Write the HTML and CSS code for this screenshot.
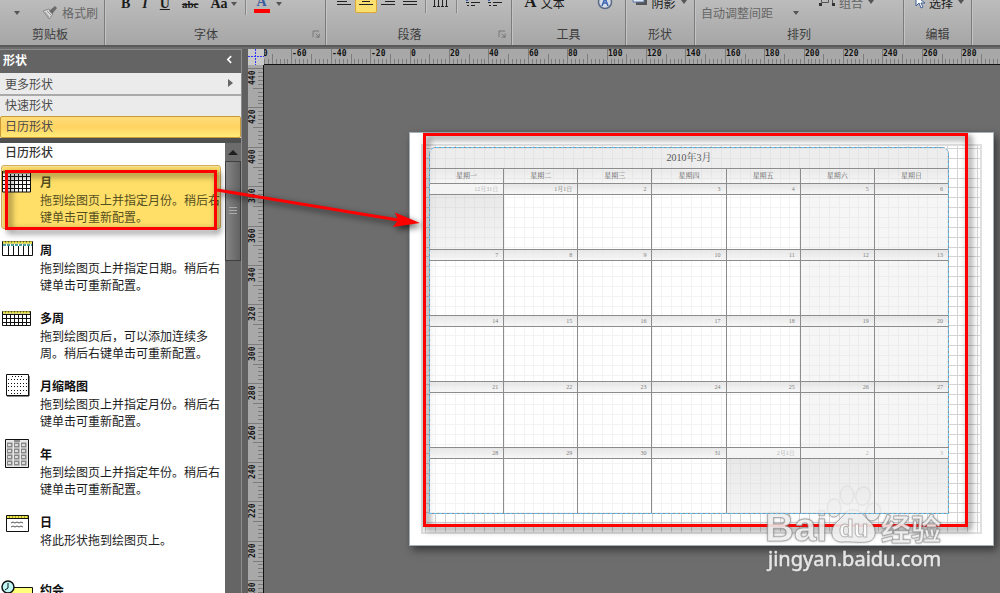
FILE: index.html
```html
<!DOCTYPE html>
<html lang="zh-CN">
<head>
<meta charset="utf-8">
<title>形状</title>
<link rel="stylesheet" href="styles.css">
</head>
<body>
<div class="app">
  <header class="ribbon">
    <section class="group group-clipboard">
      <div class="tools tools-low">
        <svg class="caret" viewBox="0 0 6 4"><path d="M0 0h6L3 4z"/></svg>
        <button class="tool muted"><svg class="brush" viewBox="0 0 16 14"><path d="M1 5l6-2 4 5-4 5-2-3z" fill="#d8d8d8" stroke="#888"/><path d="M7 5l6-5 2 2-5 6z" fill="#6a6a6a"/><path d="M3 6l4 5M5 5l4 4" stroke="#999" fill="none"/></svg>格式刷</button>
      </div>
      <h2>剪贴板</h2>
    </section>
    <section class="group group-font">
      <div class="tools tools-font">
        <button class="tool glyph bold">B</button>
        <button class="tool glyph italic">I</button>
        <button class="tool glyph under">U</button>
        <button class="tool glyph strike">abc</button>
        <button class="tool glyph case">Aa<svg class="caret" viewBox="0 0 6 4"><path d="M0 0h6L3 4z"/></svg></button>
        <i class="divider"></i>
        <button class="tool glyph color"><span>A</span></button>
        <svg class="caret" viewBox="0 0 6 4"><path d="M0 0h6L3 4z"/></svg>
      </div>
      <h2>字体</h2>
      <svg class="launcher" viewBox="0 0 8 8"><path d="M0 7V0h7M3 3l4 4M7 3v4H3" /></svg>
    </section>
    <section class="group group-para">
      <div class="tools tools-para">
        <button class="tool" aria-label="左对齐"><svg class="lines" viewBox="0 0 16 10"><path d="M1 1.500h14M1 4.500h10M1 7.500h14"/></svg></button>
        <button class="tool active" aria-label="居中"><svg class="lines" viewBox="0 0 16 10"><path d="M1 1.500h14M4 4.500h8M1 7.500h14"/></svg></button>
        <button class="tool" aria-label="右对齐"><svg class="lines" viewBox="0 0 16 10"><path d="M1 1.500h14M5 4.500h10M1 7.500h14"/></svg></button>
        <button class="tool" aria-label="两端对齐"><svg class="lines" viewBox="0 0 16 10"><path d="M1 1.500h14M1 4.500h14M1 7.500h14"/></svg></button>
        <i class="divider"></i>
        <button class="tool" aria-label="文字方向"><svg class="lines" viewBox="0 0 16 10"><path d="M1.500 0v9M5.500 0v9M9.500 3v6M13.500 3v6M0 9.500h3M4 9.500h3M8 9.500h3M12 9.500h3" /><path d="M8 1.500h3M12 1.500h3" stroke="#3b64b0"/></svg></button>
        <i class="divider"></i>
        <button class="tool" aria-label="减少缩进"><svg class="lines" viewBox="0 0 16 10"><path d="M6 2.500h5M7 5.500h9M7 8.500h4M2 5.500h3M3 8.500h2"/><path d="M0 1.500h5M3 0v4" stroke="#3b64b0" stroke-width="2"/></svg></button>
        <button class="tool" aria-label="增加缩进"><svg class="lines" viewBox="0 0 16 10"><path d="M6 2.500h5M7 5.500h9M7 8.500h4M2 5.500h3M3 8.500h2"/><path d="M0 1.500h5M3 0v4" stroke="#3b64b0" stroke-width="2"/></svg></button>
      </div>
      <h2>段落</h2>
      <svg class="launcher" viewBox="0 0 8 8"><path d="M0 7V0h7M3 3l4 4M7 3v4H3" /></svg>
    </section>
    <section class="group group-tools">
      <div class="tools tools-text">
        <button class="tool"><b class="serif-a">A</b>文本</button>
        <button class="tool" aria-label="连接点"><svg class="round" viewBox="0 0 16 16"><circle cx="8" cy="8" r="6.5" fill="#d5dce8" stroke="#5a6b85" stroke-width="1.5"/><path d="M5 12L8 4l3 8M6 9h4" fill="none" stroke="#3b64b0" stroke-width="1.5"/></svg></button>
      </div>
      <h2>工具</h2>
    </section>
    <section class="group group-shape">
      <div class="tools tools-text">
        <button class="tool"><svg class="shade" viewBox="0 0 14 8"><path d="M3 2h11v5H3z" fill="#555"/><path d="M0 0h11v4H0z" fill="#dfe8f4" stroke="#5b79a5"/></svg>阴影</button>
        <svg class="caret" viewBox="0 0 6 4"><path d="M0 0h6L3 4z"/></svg>
      </div>
      <h2>形状</h2>
    </section>
    <section class="group group-arrange">
      <div class="tools tools-low">
        <button class="tool muted">自动调整间距</button>
        <svg class="caret" viewBox="0 0 6 4"><path d="M0 0h6L3 4z"/></svg>
      </div>
      <div class="tools tools-text tools-end">
        <button class="tool muted"><svg class="combine" viewBox="0 0 16 10"><path d="M2.500 0v5.500h7V0M6 2.500h7.500V6" fill="none" stroke="#555"/><path d="M0 6h3v3H0zM13 6h3v3h-3z" fill="#333"/></svg>组合</button>
        <svg class="caret" viewBox="0 0 6 4"><path d="M0 0h6L3 4z"/></svg>
      </div>
      <h2>排列</h2>
    </section>
    <section class="group group-edit">
      <div class="tools tools-text">
        <button class="tool"><svg class="cursor" viewBox="0 0 10 13"><path d="M1 0v10l3-3 2 5 2-1-2-4h4z" fill="#fff" stroke="#3f5f96"/></svg>选择</button>
        <svg class="caret" viewBox="0 0 6 4"><path d="M0 0h6L3 4z"/></svg>
      </div>
      <h2>编辑</h2>
    </section>
  </header>

  <main class="workspace">
    <aside class="shapes">
      <div class="shapes-head"><h1>形状</h1><button class="collapse" aria-label="折叠"><svg viewBox="0 0 6 8"><path d="M5 0L1 4l4 4"/></svg></button></div>
      <nav class="stencils">
        <button class="stencil more">更多形状<svg viewBox="0 0 5 8"><path d="M0 0l5 4-5 4z"/></svg></button>
        <button class="stencil">快速形状</button>
        <button class="stencil chosen">日历形状</button>
      </nav>
      <div class="panel">
        <div class="list">
          <h2>日历形状</h2>
          <article class="item picked">
            <svg class="icon" viewBox="0 0 32 28"><path d="M2 3h28v21H2z" fill="#fff"/><path d="M2 4h28" stroke="#77772a" stroke-width="3"/><path d="M1.500 3v21h28V3M1 8.500h29M1 12.500h29M1 16.500h29M1 20.500h29M5.500 6v18M9.500 6v18M13.500 6v18M17.500 6v18M21.500 6v18M25.500 6v18" class="ink"/></svg>
            <div><h3>月</h3><p>拖到绘图页上并指定月份。稍后右键单击可重新配置。</p></div>
          </article>
          <article class="item">
            <svg class="icon" viewBox="0 0 32 28"><path d="M1.500 5.500h30v14h-30z" fill="#fff" class="ink"/><path d="M2 6.500h29" stroke="#a5a12c" stroke-width="2"/><path d="M2 6.500h29" stroke="#ece64a" stroke-width="2" stroke-dasharray="2 1"/><path d="M2 9h29" stroke="#4b9c9c" stroke-width="2" stroke-dasharray="3 1"/><path d="M7.500 10v9M12.500 10v9M17.500 10v9M22.500 10v9M27.500 10v9" class="ink"/></svg>
            <div><h3>周</h3><p>拖到绘图页上并指定日期。稍后右键单击可重新配置。</p></div>
          </article>
          <article class="item">
            <svg class="icon" viewBox="0 0 32 28"><path d="M1.500 7.500h28v14h-28z" fill="#fff" class="ink"/><path d="M2 8.500h27" stroke="#a5a12c" stroke-width="2"/><path d="M2 8.500h27" stroke="#ece64a" stroke-width="2" stroke-dasharray="2 1"/><path d="M1 10.500h29M1 14.500h29M1 18.500h29M5.500 10v11M9.500 10v11M13.500 10v11M17.500 10v11M21.500 10v11M25.500 10v11" class="ink"/></svg>
            <div><h3>多周</h3><p>拖到绘图页后，可以添加连续多周。稍后右键单击可重新配置。</p></div>
          </article>
          <article class="item">
            <svg class="icon" viewBox="0 0 32 28"><path d="M5.500 2.500h22v21h-22z" fill="#fff" class="ink"/><path d="M28 4v20H6" class="ink"/><path d="M11 4.500h10M7 7.500h19M7 11.500h19M7 14.500h19M7 18.500h19M10 21.500h10" class="ink" stroke-dasharray="1 2"/></svg>
            <div><h3>月缩略图</h3><p>拖到绘图页上并指定月份。稍后右键单击可重新配置。</p></div>
          </article>
          <article class="item">
            <svg class="icon tall" viewBox="0 0 32 32"><path d="M4.500 1.500h23v28h-23z" fill="#e8e8e8" class="ink"/><path d="M13 3h6" stroke="#333"/><path d="M6 7h5.500M13 7h5.500M20 7h5.500M6 13h5.500M13 13h5.500M20 13h5.500M6 19h5.500M13 19h5.500M20 19h5.500M6 25h5.500M13 25h5.500M20 25h5.500" stroke="#888" stroke-width="5"/><path d="M7 7h3M14 7h3M21 7h3M7 13h3M14 13h3M21 13h3M7 19h3M14 19h3M21 19h3M7 25h3M14 25h3M21 25h3" stroke="#ddd" stroke-width="2"/></svg>
            <div><h3>年</h3><p>拖到绘图页上并指定年份。稍后右键单击可重新配置。</p></div>
          </article>
          <article class="item">
            <svg class="icon" viewBox="0 0 32 28"><path d="M5.500 7.500h22v16h-22z" fill="#fff" class="ink"/><path d="M6 9h21" stroke="#a5a12c" stroke-width="2"/><path d="M6 9h21" stroke="#ece64a" stroke-width="2" stroke-dasharray="2 1"/><path d="M5 10.500h23" class="ink"/><path d="M10 15l2-1 2 1 2-1 2 1 2-1 2 1M10 19l2-1 2 1 2-1 2 1 2-1 2 1" stroke="#555" fill="none"/></svg>
            <div><h3>日</h3><p>将此形状拖到绘图页上。</p></div>
          </article>
          <article class="item">
            <svg class="icon" viewBox="0 0 32 28"><path d="M7.500 11.500h24v16h-24z" fill="#ffff7a" class="ink"/><circle cx="7" cy="11" r="6" fill="#bff6f6" stroke="#111" stroke-width="1.500"/><path d="M7 7v5l-3 2" class="ink"/></svg>
            <div><h3>约会</h3></div>
          </article>
        </div>
        <div class="scroll"><button class="scroll-up" aria-label="向上滚动"><svg viewBox="0 0 10 5"><path d="M0 5l5-5 5 5z"/></svg></button><div class="thumb"><svg viewBox="0 0 8 8"><path d="M0 .5h8M0 3.500h8M0 6.500h8"/></svg></div></div>
      </div>
    </aside>

    <section class="editor">
      <svg class="corner" viewBox="0 0 16 16"><path d="M0 7.500h16M7.500 0v16"/></svg>
      <svg class="ruler ruler-x" id="ruler-x"></svg>
      <svg class="ruler ruler-y" id="ruler-y"></svg>
      <div class="canvas">
        <div class="page">
          <svg class="grid" id="grid"></svg>
          <div class="calendar">
            <table>
              <thead>
                <tr class="title"><th colspan="7">2010年3月</th></tr>
                <tr class="weekdays"><th>星期一</th><th>星期二</th><th>星期三</th><th>星期四</th><th>星期五</th><th>星期六</th><th>星期日</th></tr>
              </thead>
              <tbody>
                <tr><td class="out"><span>12月31日</span></td><td><span>1月1日</span></td><td><span>2</span></td><td><span>3</span></td><td><span>4</span></td><td><span>5</span></td><td><span>6</span></td></tr>
                <tr><td><span>7</span></td><td><span>8</span></td><td><span>9</span></td><td><span>10</span></td><td><span>11</span></td><td><span>12</span></td><td><span>13</span></td></tr>
                <tr><td><span>14</span></td><td><span>15</span></td><td><span>16</span></td><td><span>17</span></td><td><span>18</span></td><td><span>19</span></td><td><span>20</span></td></tr>
                <tr><td><span>21</span></td><td><span>22</span></td><td><span>23</span></td><td><span>24</span></td><td><span>25</span></td><td><span>26</span></td><td><span>27</span></td></tr>
                <tr><td><span>28</span></td><td><span>29</span></td><td><span>30</span></td><td><span>31</span></td><td class="out"><span>2月1日</span></td><td class="out"><span>2</span></td><td class="out"><span>3</span></td></tr>
              </tbody>
            </table>
          </div>
        </div>
      </div>
    </section>
  </main>

  <svg class="marks" viewBox="0 0 1000 593">
    <g class="red">
      <rect x="6.500" y="171.500" width="209" height="57"/>
      <rect x="424.500" y="134.500" width="542" height="391"/>
      <path d="M217 190L398 220" class="shaft"/>
      <path d="M395 212.500L420 223L393 227L398 220Z" class="head"/>
    </g>
    <g class="stamp">
      <text x="765" y="541" class="logo">Bai</text>
      <ellipse cx="834" cy="508" rx="6.500" ry="9"/>
      <ellipse cx="847" cy="495" rx="6.500" ry="9"/>
      <ellipse cx="863" cy="496" rx="7" ry="9" transform="rotate(12 863 496)"/>
      <ellipse cx="873" cy="512" rx="7" ry="9" transform="rotate(20 873 512)"/>
      <path d="M853 510c8 0 11 6 16 11c8 6 9 20-3 21c-8 1-17-1-25 0c-12-1-11-15-3-21c6-5 8-11 15-11z"/>
      <text x="839" y="537" class="du">du</text>
      <text x="881" y="540" class="word">经验</text>
      <text x="768" y="566" class="site">jingyan.baidu.com</text>
    </g>
  </svg>
</div>
<script src="rulers.js"></script>
</body>
</html>
```
FILE: styles.css
```css
* { box-sizing: border-box; }

body {
  margin: 0;
  background: #6d6d6d;
  color: #1c1c1c;
  font: 12px/17px "Noto Sans CJK SC", sans-serif;
}

h1, h2, h3, p { margin: 0; font-size: 12px; }

button {
  padding: 0;
  border: 0;
  background: none;
  color: inherit;
  font: inherit;
}

svg { display: block; flex: none; overflow: visible; }

.app {
  position: relative;
  display: flex;
  flex-direction: column;
  height: 100vh;
  overflow: hidden;
}

/* Ribbon */
.ribbon {
  display: flex;
  flex: none;
  height: 47px;
  overflow: hidden;
  border-bottom: 2px solid #595959;
  background: linear-gradient(#bcbcbc, #a6a6a6);
}

.group {
  position: relative;
  display: flex;
  flex: none;
  flex-wrap: wrap;
  align-content: flex-end;
  align-items: flex-end;
  justify-content: center;
  border-right: 1px solid #7c7c7c;
  box-shadow: 1px 0 #c4c4c4;
}

.group h2 {
  width: 100%;
  padding: 2px 4px 3px 0;
  color: #3d3d3d;
  font-weight: 400;
  text-align: center;
}

.group-clipboard { width: 105px; }
.group-clipboard .tools { padding-left: 8px; }
.group-font { width: 221px; }
.group-font h2 { padding-right: 18px; }
.group-para { width: 186px; }
.group-para h2 { padding-right: 18px; }
.group-tools { width: 114px; }
.group-tools h2 { padding-right: 0; }
.group-shape { width: 69px; }
.group-shape h2 { padding-right: 0; }
.group-arrange { width: 209px; justify-content: flex-start; }
.group-arrange h2 { padding-right: 0; }
.group-edit { width: 68px; }
.group-edit h2 { padding-right: 0; }
.group-edit .tools { padding-left: 4px; }

.tools { display: flex; align-items: center; }
.tools-low { height: 21px; gap: 22px; }
.tools-font { width: 100%; height: 31px; gap: 12px; padding: 0 0 8px 16px; }
.tools-para { width: 100%; height: 33px; padding: 0 10px 10px; gap: 6px; }
.tools-text { height: 31px; padding-bottom: 11px; gap: 5px; }
.group-tools .tools-text { gap: 32px; }
.group-arrange .tools-low { padding-left: 6px; gap: 20px; }
.tools-end { margin-left: 20px; }

.tool { display: flex; align-items: center; gap: 4px; white-space: nowrap; }
.muted { color: #666; }
.glyph { font: bold 14px/18px "Liberation Serif", serif; }
.italic { font-style: italic; }
.under { text-decoration: underline; }
.strike { font-size: 11px; text-decoration: line-through; }
.case { gap: 3px; }
.color span { padding: 0 3px; border-bottom: 4px solid #f00; color: #3b5ca0; line-height: 14px; }
.tools-font .divider { margin: 0 -4px; }
.tools-font .color + .caret { margin-left: -6px; }
.serif-a { font: bold 17px/18px "Liberation Serif", serif; }

.active {
  height: 22px;
  padding: 0 2px;
  margin: 0 -3px;
  border: 1px solid #d9a836;
  border-radius: 2px;
  background: #fbe070;
}

.divider { flex: none; width: 1px; height: 22px; background: #868686; box-shadow: 1px 0 #c9c9c9; }
.tools-para .divider { margin: 0 1px; }
.caret { width: 6px; height: 4px; fill: #555; }
.brush { width: 16px; height: 14px; }
.round { width: 16px; height: 16px; }
.shade { width: 14px; height: 8px; }
.combine { width: 16px; height: 10px; }
.cursor { width: 10px; height: 13px; }
.lines { width: 16px; height: 10px; fill: none; stroke: #222; }

.launcher {
  position: absolute;
  right: 5px;
  bottom: 7px;
  width: 7px;
  height: 7px;
  fill: none;
  stroke: #707070;
}

/* Shapes pane */
.workspace { display: flex; flex: 1; min-height: 0; padding-top: 2px; }

.shapes {
  display: flex;
  flex: none;
  flex-direction: column;
  width: 242px;
  border-right: 1px solid #8d8d8d;
}

.shapes-head {
  display: flex;
  align-items: center;
  justify-content: space-between;
  height: 24px;
  padding: 0 9px 4px 3px;
  border-top: 1px solid #8d8d8d;
  background: #646464;
  color: #fff;
}

.collapse svg { width: 5px; height: 7px; fill: none; stroke: #fff; stroke-width: 2; }

.stencils { display: flex; flex-direction: column; border-bottom: 5px solid #505050; background: #ebebeb; }

.stencil {
  display: flex;
  align-items: center;
  justify-content: space-between;
  height: 20px;
  padding: 0 8px 3px 5px;
  color: #4b4b4b;
  text-align: left;
}

.more { height: 23px; padding-bottom: 1px; border-bottom: 2px solid #aaa; }
.more svg { width: 5px; height: 8px; fill: #666; }

.chosen {
  height: 22px;
  padding-left: 4px;
  border: 1px solid #c99b38;
  border-radius: 2px;
  background: linear-gradient(#fcdc78, #ffd362 50%, #ffec78);
}

.panel { display: flex; flex: 1; min-height: 0; overflow: hidden; background: #fff; }
.list { flex: 1; min-width: 0; }
.list > h2 { height: 22px; padding: 0 5px; color: #333; font-weight: 500; }

.item {
  display: flex;
  gap: 7px;
  height: 64px;
  margin: 0 4px 4px 1px;
  padding: 6px 0 0;
  border: 1px solid transparent;
  border-radius: 3px;
}

.item > div { flex: none; width: 182px; }
.item h3 { color: #111; font-weight: 700; line-height: 19px; }
.item p { color: #1c1c1c; }

.picked { border-color: #d3ad55; background: #ffdf68; box-shadow: inset 0 0 0 1px #f6e3a4; }
.picked h3, .picked p { color: #55501f; }

.icon { width: 32px; height: 28px; margin: -4px 0 0 -1px; }
.tall { height: 32px; margin-top: -6px; }
.ink { stroke: #111; }
path.ink:not([fill]) { fill: none; }

.scroll { flex: none; width: 16px; background: #656565; }

.scroll-up {
  display: flex;
  align-items: center;
  justify-content: center;
  width: 100%;
  height: 18px;
  background: #6c6c6c;
}

.scroll-up svg { width: 10px; height: 5px; fill: #1e1e1e; }

.thumb {
  display: flex;
  align-items: center;
  justify-content: center;
  height: 100px;
  border: 1px solid #3f3f3f;
  background: linear-gradient(90deg, #858585, #626262);
}

.thumb svg { width: 8px; height: 8px; stroke: #aaa; }

/* Drawing area */
.editor {
  display: grid;
  flex: 1;
  grid-template: 16px 1fr / 16px 1fr;
  min-width: 0;
  padding-left: 6px;
  background: #606060;
}

.corner { width: 16px; height: 16px; background: #c9c9c9; stroke: #33f; stroke-dasharray: 2 1; }
.ruler { overflow: hidden; background: #a8a8a8; }
.ruler-x { width: 100%; height: 16px; border-bottom: 1px solid #111; }
.ruler-y { width: 16px; height: 100%; border-right: 1px solid #111; }
.ruler path { fill: none; stroke: #7c7c7c; }
.ruler text { fill: #111; font: bold 8px "DejaVu Sans Mono", monospace; }

.canvas { min-width: 0; padding: 67px 6px 47px 145px; background: #6d6d6d; }

.page {
  display: grid;
  height: 100%;
  padding: 12px;
  border: 1px solid #a4b0b6;
  background: #fff;
  box-shadow: 3px 4px 8px rgba(0, 0, 0, .5);
}

.grid { grid-area: 1 / 1; width: 100%; height: 100%; overflow: hidden; outline: 2px solid #e0e0e0; outline-offset: -1px; }
.grid path { fill: none; stroke: #d4d4d4; }

.calendar {
  position: relative;
  z-index: 1;
  grid-area: 1 / 1;
  align-self: start;
  margin: 2px 32px 0 7px;
  overflow: hidden;
  border-radius: 7px 7px 0 0;
}

.calendar::after {
  position: absolute;
  inset: 0;
  border: 1px dashed #5fc0f2;
  border-radius: 7px 7px 0 0;
  content: "";
}

table {
  width: 100%;
  border-collapse: collapse;
  table-layout: fixed;
  color: #808080;
  font: 6px/10px "Liberation Serif", "Noto Serif CJK SC", "Noto Sans CJK SC", serif;
}

th, td { padding: 0; border: 1px solid #8c8c8c; background: rgba(255, 255, 255, .72); }
th { background: rgba(232, 232, 232, .78); font-weight: 400; }
.title th { height: 21px; color: #555; font-size: 10px; }
.weekdays th { height: 15px; background: linear-gradient(rgba(228, 228, 228, .8), rgba(244, 244, 244, .8)); color: #666; font-size: 7px; }
td { height: 66px; vertical-align: top; }
td:nth-child(n+6) { background: rgba(243, 243, 243, .78); }

td span {
  display: block;
  height: 11px;
  padding-right: 5px;
  border-bottom: 1px solid #8c8c8c;
  background: linear-gradient(rgba(225, 225, 225, .8), rgba(245, 245, 245, .8));
  text-align: right;
}

td.out { background: linear-gradient(rgba(224, 224, 224, .8), rgba(242, 242, 242, .8)); color: #b5b5b5; }
td.out span { background: #f4f4f4; }

/* Annotations */
.marks { position: absolute; top: 0; left: 0; width: 1000px; height: 593px; pointer-events: none; }
.red { fill: none; stroke: #f00; stroke-width: 3; filter: drop-shadow(3px 3px 3px rgba(0, 0, 0, .65)); }
.head { fill: #f00; stroke: none; }
.stamp { fill: rgba(255, 255, 255, .8); stroke: rgba(120, 120, 120, .5); filter: drop-shadow(0 0 1px rgba(90, 90, 90, .6)); }
.stamp .logo { font: bold 40px "Liberation Sans", sans-serif; }
.stamp .du { font: bold 24px "Liberation Sans", sans-serif; }
.stamp .word { font: bold 30px "Noto Sans CJK SC", sans-serif; }
.stamp .site { font: 20px "Noto Sans", sans-serif; fill: #e6e6e6; stroke: #e6e6e6; stroke-width: .5; }
```
FILE: rulers.js
```js
const NS = "http://www.w3.org/2000/svg";
const STEP = 3.94; // pixels between two small marks

function add(parent, name, attrs, text) {
  const el = document.createElementNS(NS, name);
  for (const key in attrs) el.setAttribute(key, attrs[key]);
  if (text !== undefined) el.textContent = text;
  parent.appendChild(el);
}

function snap(v) { return Math.round(v) + 0.5; }

function drawRuler(id, origin, first, sign, vertical) {
  const svg = document.getElementById(id);
  let d = "";
  for (let i = 0; i < 220; i++) {
    const at = snap(origin + i * STEP);
    const from = i % 10 === 0 ? 0 : i % 5 === 0 ? 5 : 10;
    d += vertical ? `M${from} ${at}H15` : `M${at} ${from}V15`;
    if (i % 10 === 0) {
      const value = String(first + sign * i * 2);
      const pos = Math.round(origin + i * STEP);
      if (vertical) add(svg, "text", { transform: `translate(7 ${pos + 17}) rotate(-90)` }, value);
      else add(svg, "text", { x: pos + 1, y: 7 }, value);
    }
  }
  add(svg, "path", { d });
}

function drawGrid() {
  const svg = document.getElementById("grid");
  let d = "";
  for (let i = 0; i < 100; i++) {
    const at = snap(i * 9.85 + 3);
    d += `M${at} 0V900M0 ${at}H1600`;
  }
  add(svg, "path", { d });
}

drawRuler("ruler-x", -12, -80, 1, false);
drawRuler("ruler-y", 3, 440, -1, true);
drawGrid();
```
